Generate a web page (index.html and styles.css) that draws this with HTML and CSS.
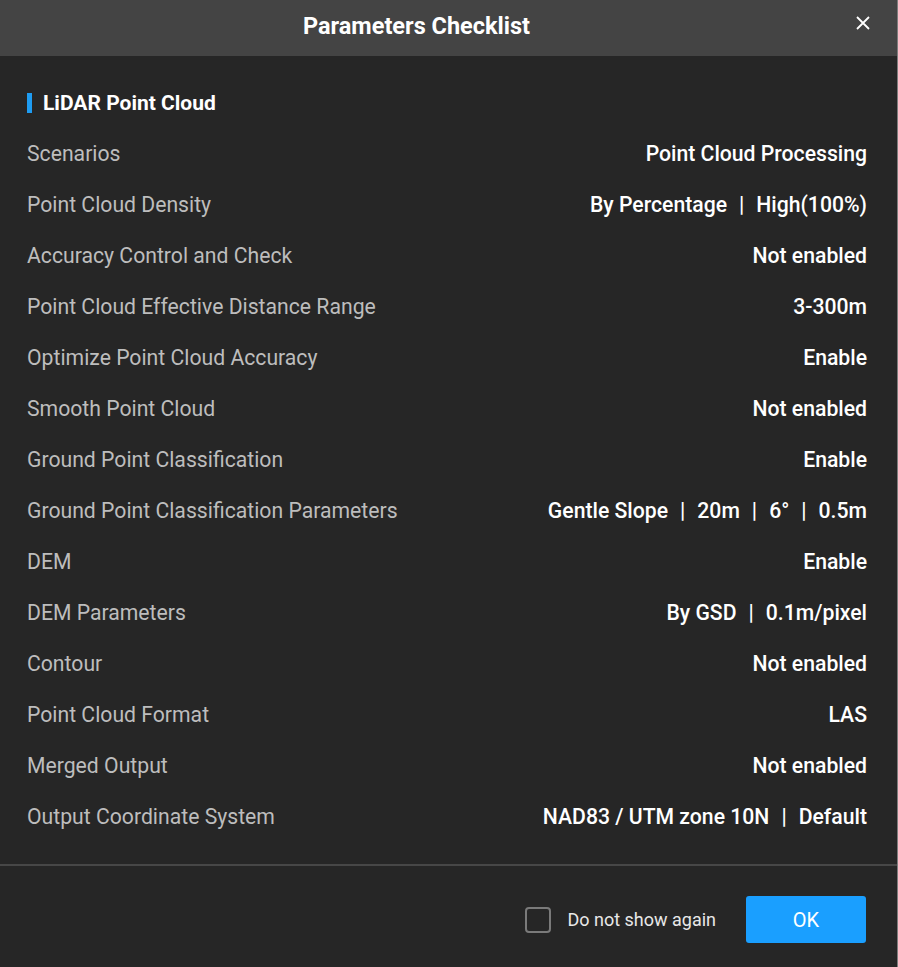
FILE: index.html
```html
<!DOCTYPE html>
<html lang="en">
<head>
<meta charset="utf-8">
<title>Parameters Checklist</title>
<link rel="stylesheet" href="styles.css">
</head>
<body>
<div class="dialog">
  <header class="dlg-head">
    <h1 class="dlg-title">Parameters Checklist</h1>
    <button class="dlg-close" aria-label="Close">
      <svg width="14" height="14" viewBox="0 0 14 14"><path d="M1 1L13 13M13 1L1 13" stroke="#ffffff" stroke-width="1.8" fill="none"/></svg>
    </button>
  </header>
  <main class="dlg-body">
    <h2 class="sec-title">LiDAR Point Cloud</h2>
    <div class="rows">
      <div class="row"><span class="lbl">Scenarios</span><span class="val">Point Cloud Processing</span></div>
      <div class="row"><span class="lbl">Point Cloud Density</span><span class="val">By Percentage<i class="sep">|</i>High(100%)</span></div>
      <div class="row"><span class="lbl">Accuracy Control and Check</span><span class="val">Not enabled</span></div>
      <div class="row"><span class="lbl">Point Cloud Effective Distance Range</span><span class="val">3-300m</span></div>
      <div class="row"><span class="lbl">Optimize Point Cloud Accuracy</span><span class="val">Enable</span></div>
      <div class="row"><span class="lbl">Smooth Point Cloud</span><span class="val">Not enabled</span></div>
      <div class="row"><span class="lbl">Ground Point Classification</span><span class="val">Enable</span></div>
      <div class="row"><span class="lbl">Ground Point Classification Parameters</span><span class="val">Gentle Slope<i class="sep">|</i>20m<i class="sep">|</i>6°<i class="sep">|</i>0.5m</span></div>
      <div class="row"><span class="lbl">DEM</span><span class="val">Enable</span></div>
      <div class="row"><span class="lbl">DEM Parameters</span><span class="val">By GSD<i class="sep">|</i>0.1m/pixel</span></div>
      <div class="row"><span class="lbl">Contour</span><span class="val">Not enabled</span></div>
      <div class="row"><span class="lbl">Point Cloud Format</span><span class="val">LAS</span></div>
      <div class="row"><span class="lbl">Merged Output</span><span class="val">Not enabled</span></div>
      <div class="row"><span class="lbl">Output Coordinate System</span><span class="val">NAD83 / UTM zone 10N<i class="sep">|</i>Default</span></div>
    </div>
  </main>
  <footer class="dlg-foot">
    <label class="chk"><span class="chk-box"></span><span class="chk-text">Do not show again</span></label>
    <button class="btn-ok">OK</button>
  </footer>
</div>
</body>
</html>
```
FILE: styles.css
```css
* { box-sizing: border-box; }
html, body { margin: 0; padding: 0; background: #262626; }
body { font-family: Roboto, "Noto Sans", "Liberation Sans", sans-serif; }
.dialog {
  width: 898px;
  min-height: 967px;
  background: #262626;
  border-right: 1px solid #7d7d7d;
  display: flex;
  flex-direction: column;
}
.dlg-head {
  height: 56px;
  background: #444444;
  display: flex;
  align-items: center;
  justify-content: center;
  padding-right: 64px;
  position: relative;
}
.dlg-title {
  margin: 0 0 4px 0;
  font-size: 23.5px;
  font-weight: 700;
  color: #ffffff;
  line-height: 26px;
}
.dlg-close {
  position: absolute;
  right: 27px;
  top: 16px;
  width: 14px;
  height: 14px;
  padding: 0;
  border: 0;
  background: none;
  display: block;
}
.dlg-close svg { display: block; }
.dlg-body {
  padding: 37px 30px 22px 27px;
  border-bottom: 2px solid #474747;
}
.sec-title {
  margin: 0 0 15px 0;
  height: 20px;
  border-left: 5px solid #1e9cf2;
  padding-left: 11px;
  font-size: 21px;
  font-weight: 700;
  color: #ffffff;
  line-height: 20px;
}
.row {
  height: 51px;
  display: flex;
  align-items: center;
  justify-content: space-between;
  font-size: 21.2px;
}
.lbl { color: #bdbdbd; }
.val { color: #ffffff; font-weight: 500; white-space: nowrap; }
.sep { font-style: normal; margin: 0 12px; }
.dlg-foot {
  display: flex;
  justify-content: flex-end;
  align-items: center;
  padding: 30px 31px 24px 0;
}
.chk { display: flex; align-items: center; }
.chk-box {
  width: 26px;
  height: 26px;
  border: 2px solid #7a7a7a;
  border-radius: 4px;
  margin-right: 16px;
}
.chk-text { color: #e8e8e8; font-size: 18px; }
.btn-ok {
  margin-left: 30px;
  width: 120px;
  height: 47px;
  border: 0;
  border-radius: 3px;
  background: #1a9fff;
  color: #ffffff;
  font-family: Roboto, sans-serif;
  font-size: 20px;
}
```
